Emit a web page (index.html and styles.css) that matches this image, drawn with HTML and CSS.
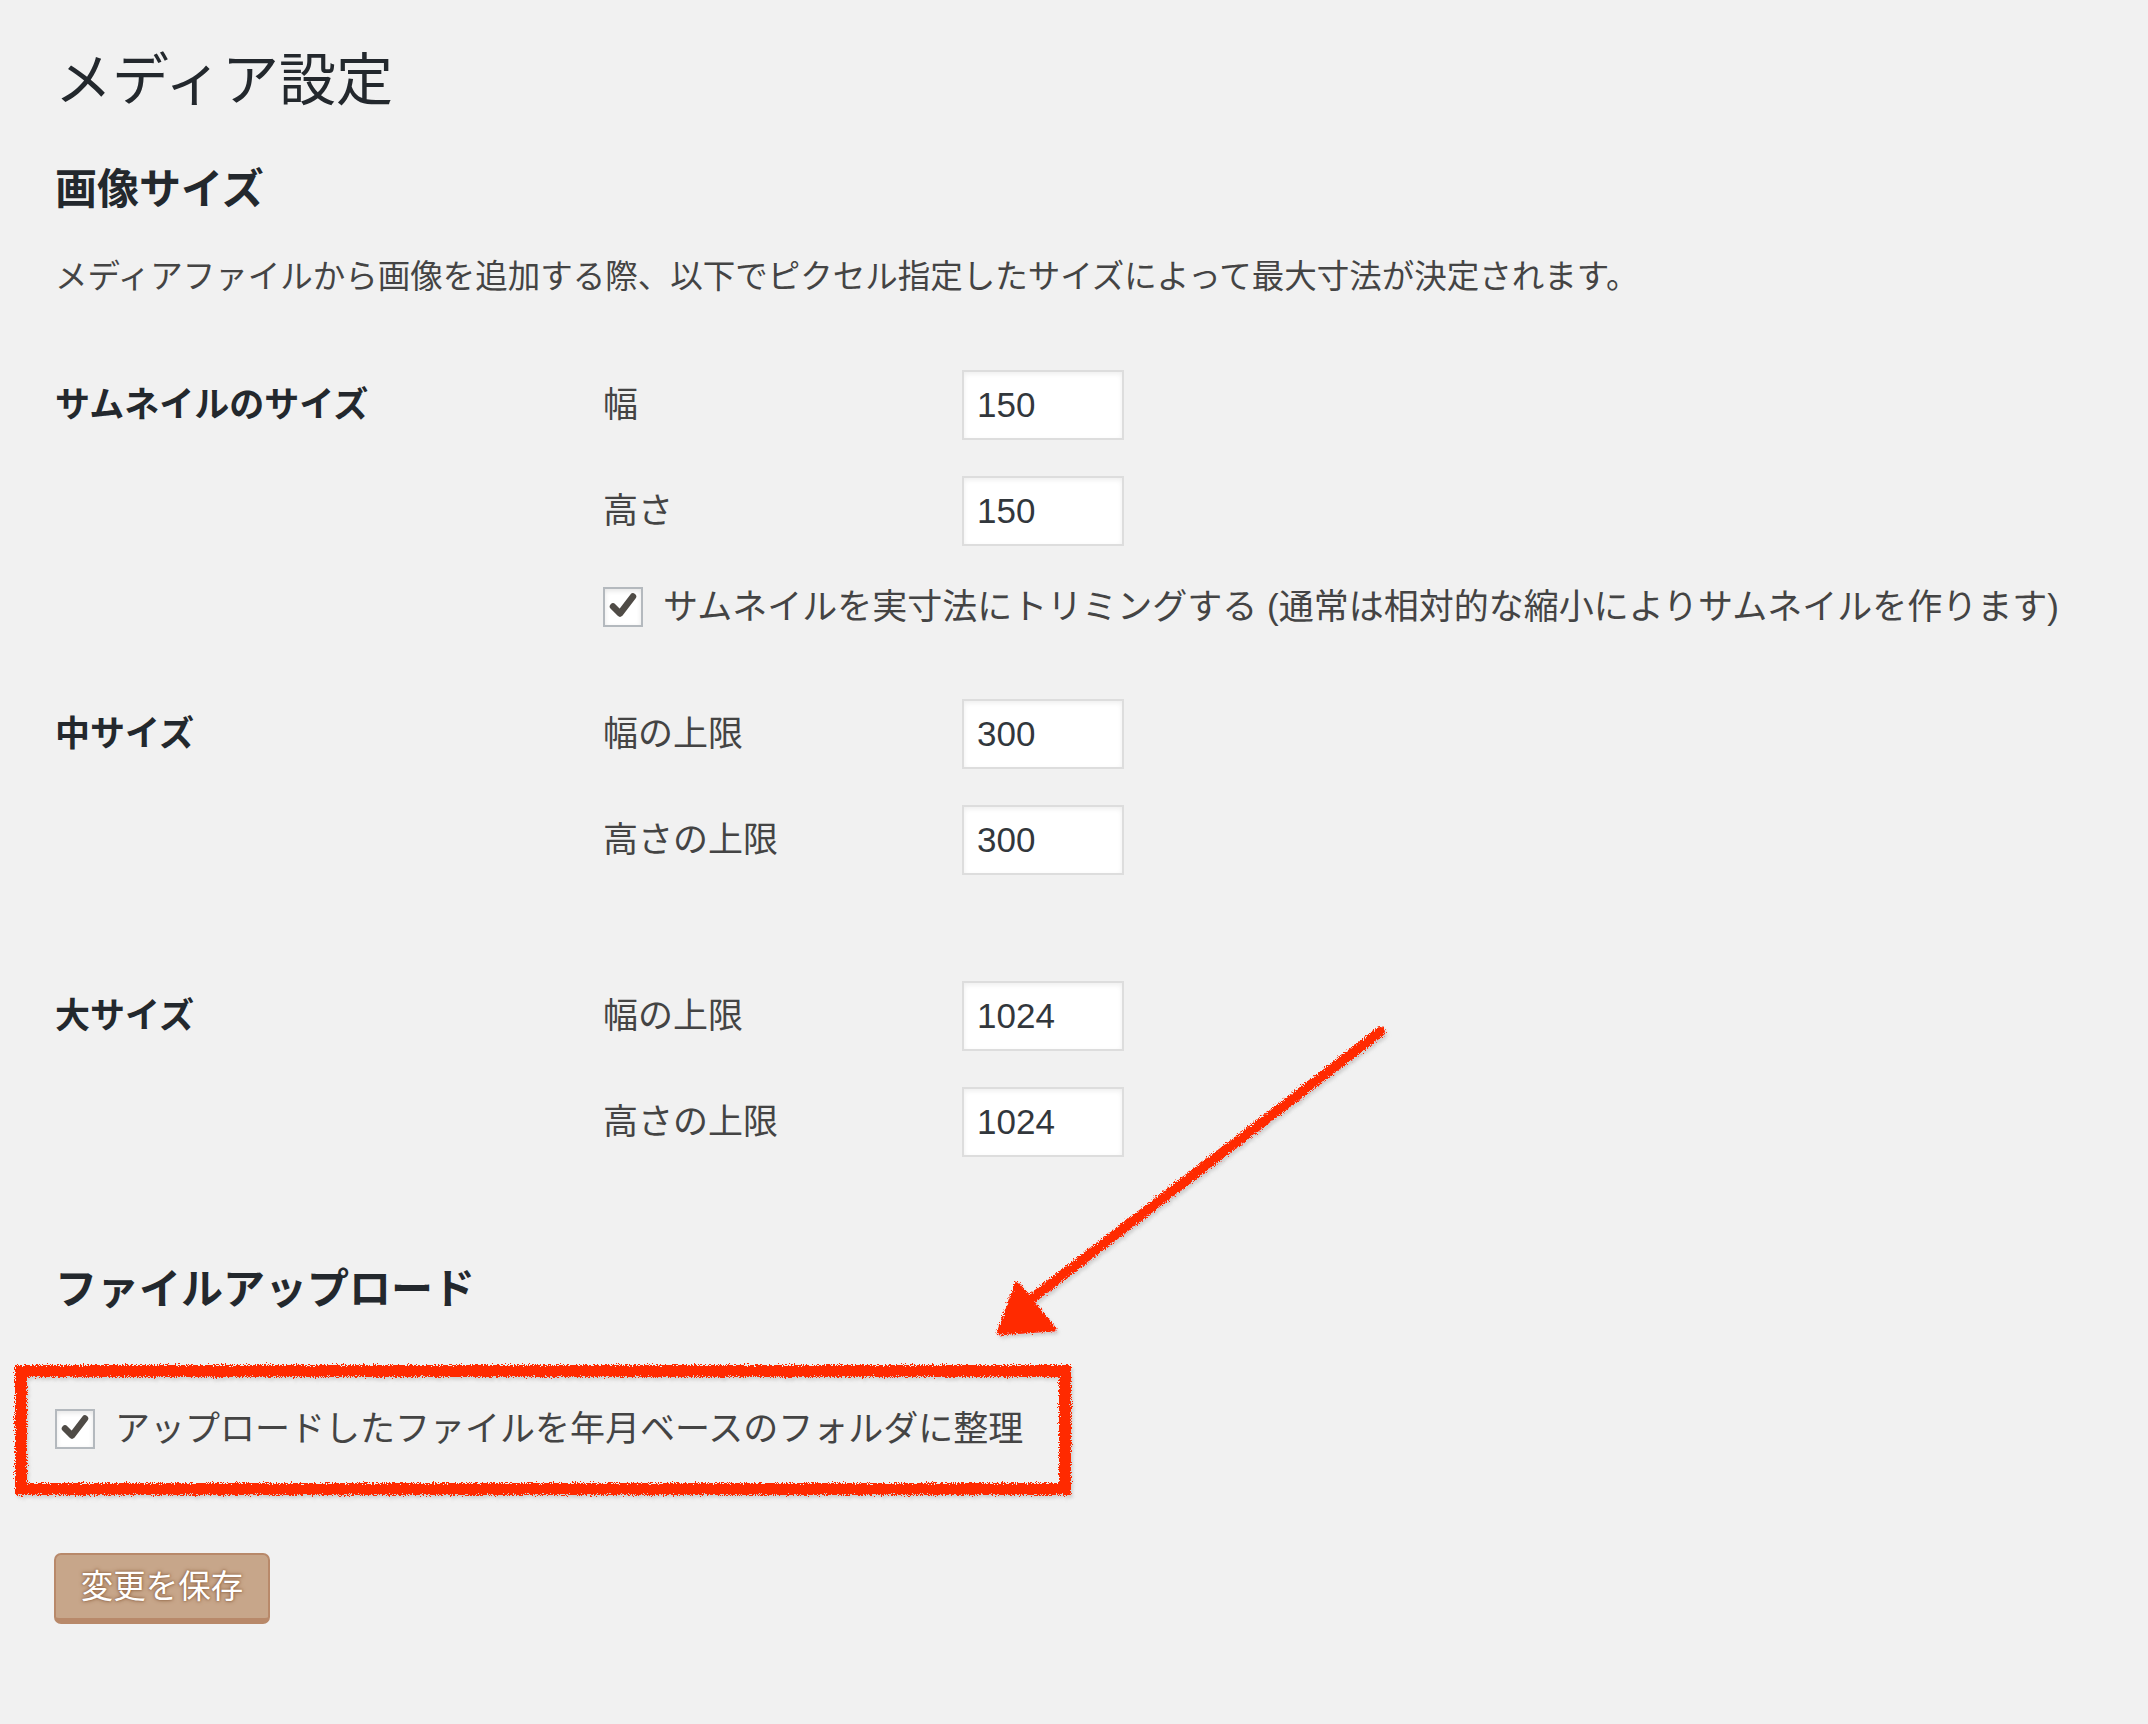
FILE: index.html
```html
<!DOCTYPE html>
<html lang="ja">

<head>
    <meta charset="UTF-8">
    <meta name="viewport" content="width=device-width, initial-scale=1.0">
    <title>メディア設定</title>
    <link rel="stylesheet" href="styles.css">
</head>

<body>
    <div class="wrap">
        <h1>メディア設定</h1>

        <h2 class="section-title">画像サイズ</h2>
        <p class="description">メディアファイルから画像を追加する際、以下でピクセル指定したサイズによって最大寸法が決定されます。</p>

        <div class="form-table">
            <!-- サムネイル -->
            <div class="form-row row-thumb">
                <div class="row-label">サムネイルのサイズ</div>
                <div class="row-fields">
                    <div class="field">
                        <label for="thumbnail_size_w">幅</label>
                        <input class="small-text" type="text" id="thumbnail_size_w" value="150">
                    </div>
                    <div class="field">
                        <label for="thumbnail_size_h">高さ</label>
                        <input class="small-text" type="text" id="thumbnail_size_h" value="150">
                    </div>
                    <div class="check-row check-crop">
                        <span class="checkbox">
                            <svg viewBox="0 0 40 40" width="40" height="40"><polyline points="10,19.5 17,26.5 30,9.5" fill="none" stroke="#4f4b46" stroke-width="6.5" stroke-linecap="round" stroke-linejoin="round"/></svg>
                        </span>
                        <span class="check-text">サムネイルを実寸法にトリミングする (通常は相対的な縮小によりサムネイルを作ります)</span>
                    </div>
                </div>
            </div>

            <!-- 中サイズ -->
            <div class="form-row row-medium">
                <div class="row-label">中サイズ</div>
                <div class="row-fields">
                    <div class="field">
                        <label for="medium_size_w">幅の上限</label>
                        <input class="small-text" type="text" id="medium_size_w" value="300">
                    </div>
                    <div class="field">
                        <label for="medium_size_h">高さの上限</label>
                        <input class="small-text" type="text" id="medium_size_h" value="300">
                    </div>
                </div>
            </div>

            <!-- 大サイズ -->
            <div class="form-row row-large">
                <div class="row-label">大サイズ</div>
                <div class="row-fields">
                    <div class="field">
                        <label for="large_size_w">幅の上限</label>
                        <input class="small-text" type="text" id="large_size_w" value="1024">
                    </div>
                    <div class="field">
                        <label for="large_size_h">高さの上限</label>
                        <input class="small-text" type="text" id="large_size_h" value="1024">
                    </div>
                </div>
            </div>
        </div>

        <h2 class="section-title upload-title">ファイルアップロード</h2>
        <div class="check-row check-upload">
            <span class="checkbox">
                <svg viewBox="0 0 40 40" width="40" height="40"><polyline points="10,19.5 17,26.5 30,9.5" fill="none" stroke="#4f4b46" stroke-width="6.5" stroke-linecap="round" stroke-linejoin="round"/></svg>
            </span>
            <span class="check-text">アップロードしたファイルを年月ベースのフォルダに整理</span>
        </div>

        <button class="button-primary" type="button">変更を保存</button>
    </div>

    <!-- 赤ペン注釈 -->
    <svg class="annotation" width="2148" height="1724" viewBox="0 0 2148 1724">
        <defs>
            <filter id="crayon" x="-5%" y="-5%" width="110%" height="110%">
                <feTurbulence type="fractalNoise" baseFrequency="0.9" numOctaves="2" seed="3" result="noise"/>
                <feDisplacementMap in="SourceGraphic" in2="noise" scale="7" xChannelSelector="R" yChannelSelector="G" result="rough"/>
                <feGaussianBlur in="rough" stdDeviation="1.5" result="blur"/>
                <feOffset in="blur" dx="2" dy="3" result="off"/>
                <feColorMatrix in="off" type="matrix" values="0 0 0 0 0.3  0 0 0 0 0.3  0 0 0 0 0.3  0 0 0 0.35 0" result="shadow"/>
                <feMerge>
                    <feMergeNode in="shadow"/>
                    <feMergeNode in="rough"/>
                </feMerge>
            </filter>
        </defs>
        <g filter="url(#crayon)" fill="none" stroke="#ff2a00">
            <rect x="21" y="1371" width="1044" height="118" stroke-width="12"/>
            <line x1="1380" y1="1032" x2="1030" y2="1300" stroke-width="10" stroke-linecap="round"/>
            <polygon points="1017,1284 1054,1329 999,1333" fill="#ff2a00" stroke-width="5" stroke-linejoin="round"/>
        </g>
    </svg>
</body>
</html>
```

FILE: styles.css
```css
body {
    margin: 0;
    padding: 0;
    min-height: 1724px;
    background-color: #f1f1f1;
    color: #444;
    font-family: "Liberation Sans", "Noto Sans CJK JP", sans-serif;
    position: relative;
}

.wrap {
    padding: 0 0 0 55px;
    overflow: hidden;
}

h1 {
    margin: 43px 0 0;
    font-size: 57px;
    line-height: 75px;
    font-weight: 400;
    color: #23282d;
}

.section-title {
    margin: 44px 0 0;
    font-size: 42px;
    line-height: 56px;
    font-weight: 700;
    color: #23282d;
}

.description {
    margin: 35px 0 0;
    font-size: 32.5px;
    line-height: 48px;
}

/* 設定テーブル */
.form-table {
    margin-top: 69px;
}

.form-row {
    display: grid;
    grid-template-columns: 548px 1fr;
}

.row-medium {
    margin-top: 72px;
}

.row-large {
    margin-top: 106px;
}

.row-label {
    font-size: 35px;
    line-height: 70px;
    font-weight: 700;
    color: #23282d;
}

.row-fields {
    display: flex;
    flex-direction: column;
    gap: 36px;
}

.field {
    display: flex;
    align-items: center;
    height: 70px;
}

.field label {
    width: 359px;
    font-size: 35px;
    line-height: 70px;
    color: #444;
}

input.small-text {
    box-sizing: border-box;
    width: 162px;
    height: 70px;
    margin: 0;
    padding: 0 13px;
    border: 2.5px solid #ddd;
    background-color: #fff;
    box-shadow: inset 0 2px 5px rgba(0, 0, 0, 0.07);
    font-family: "Liberation Sans", sans-serif;
    font-size: 35px;
    color: #32373c;
    outline: none;
}

/* チェックボックス */
.check-row {
    display: flex;
    align-items: center;
    gap: 20px;
    height: 40px;
}

.check-crop {
    margin-top: 5px;
}

.checkbox {
    box-sizing: border-box;
    width: 40px;
    height: 40px;
    flex: none;
    display: flex;
    align-items: center;
    justify-content: center;
    border: 2.5px solid #b4b9be;
    background-color: #fff;
    box-shadow: inset 0 2px 5px rgba(0, 0, 0, 0.1);
}

.checkbox svg {
    display: block;
    flex: none;
}

.check-text {
    font-size: 35px;
    line-height: 40px;
    white-space: nowrap;
    color: #444;
}

.upload-title {
    margin-top: 105px;
}

.check-upload {
    margin-top: 91px;
}

/* 保存ボタン */
.button-primary {
    display: block;
    box-sizing: border-box;
    width: 216px;
    height: 71px;
    margin: 104px 0 0 -1px;
    padding: 0 24px;
    border: 2.5px solid #b8896a;
    border-bottom-width: 6px;
    border-radius: 7px;
    background-color: #c7a68a;
    color: #fff;
    font-family: "Liberation Sans", "Noto Sans CJK JP", sans-serif;
    font-size: 32.5px;
    line-height: 60px;
    text-shadow: 0 0 4px #8c5f3e, 0 0 2px #8c5f3e;
    cursor: pointer;
}

/* 注釈レイヤー */
.annotation {
    position: absolute;
    top: 0;
    left: 0;
    pointer-events: none;
}
```
